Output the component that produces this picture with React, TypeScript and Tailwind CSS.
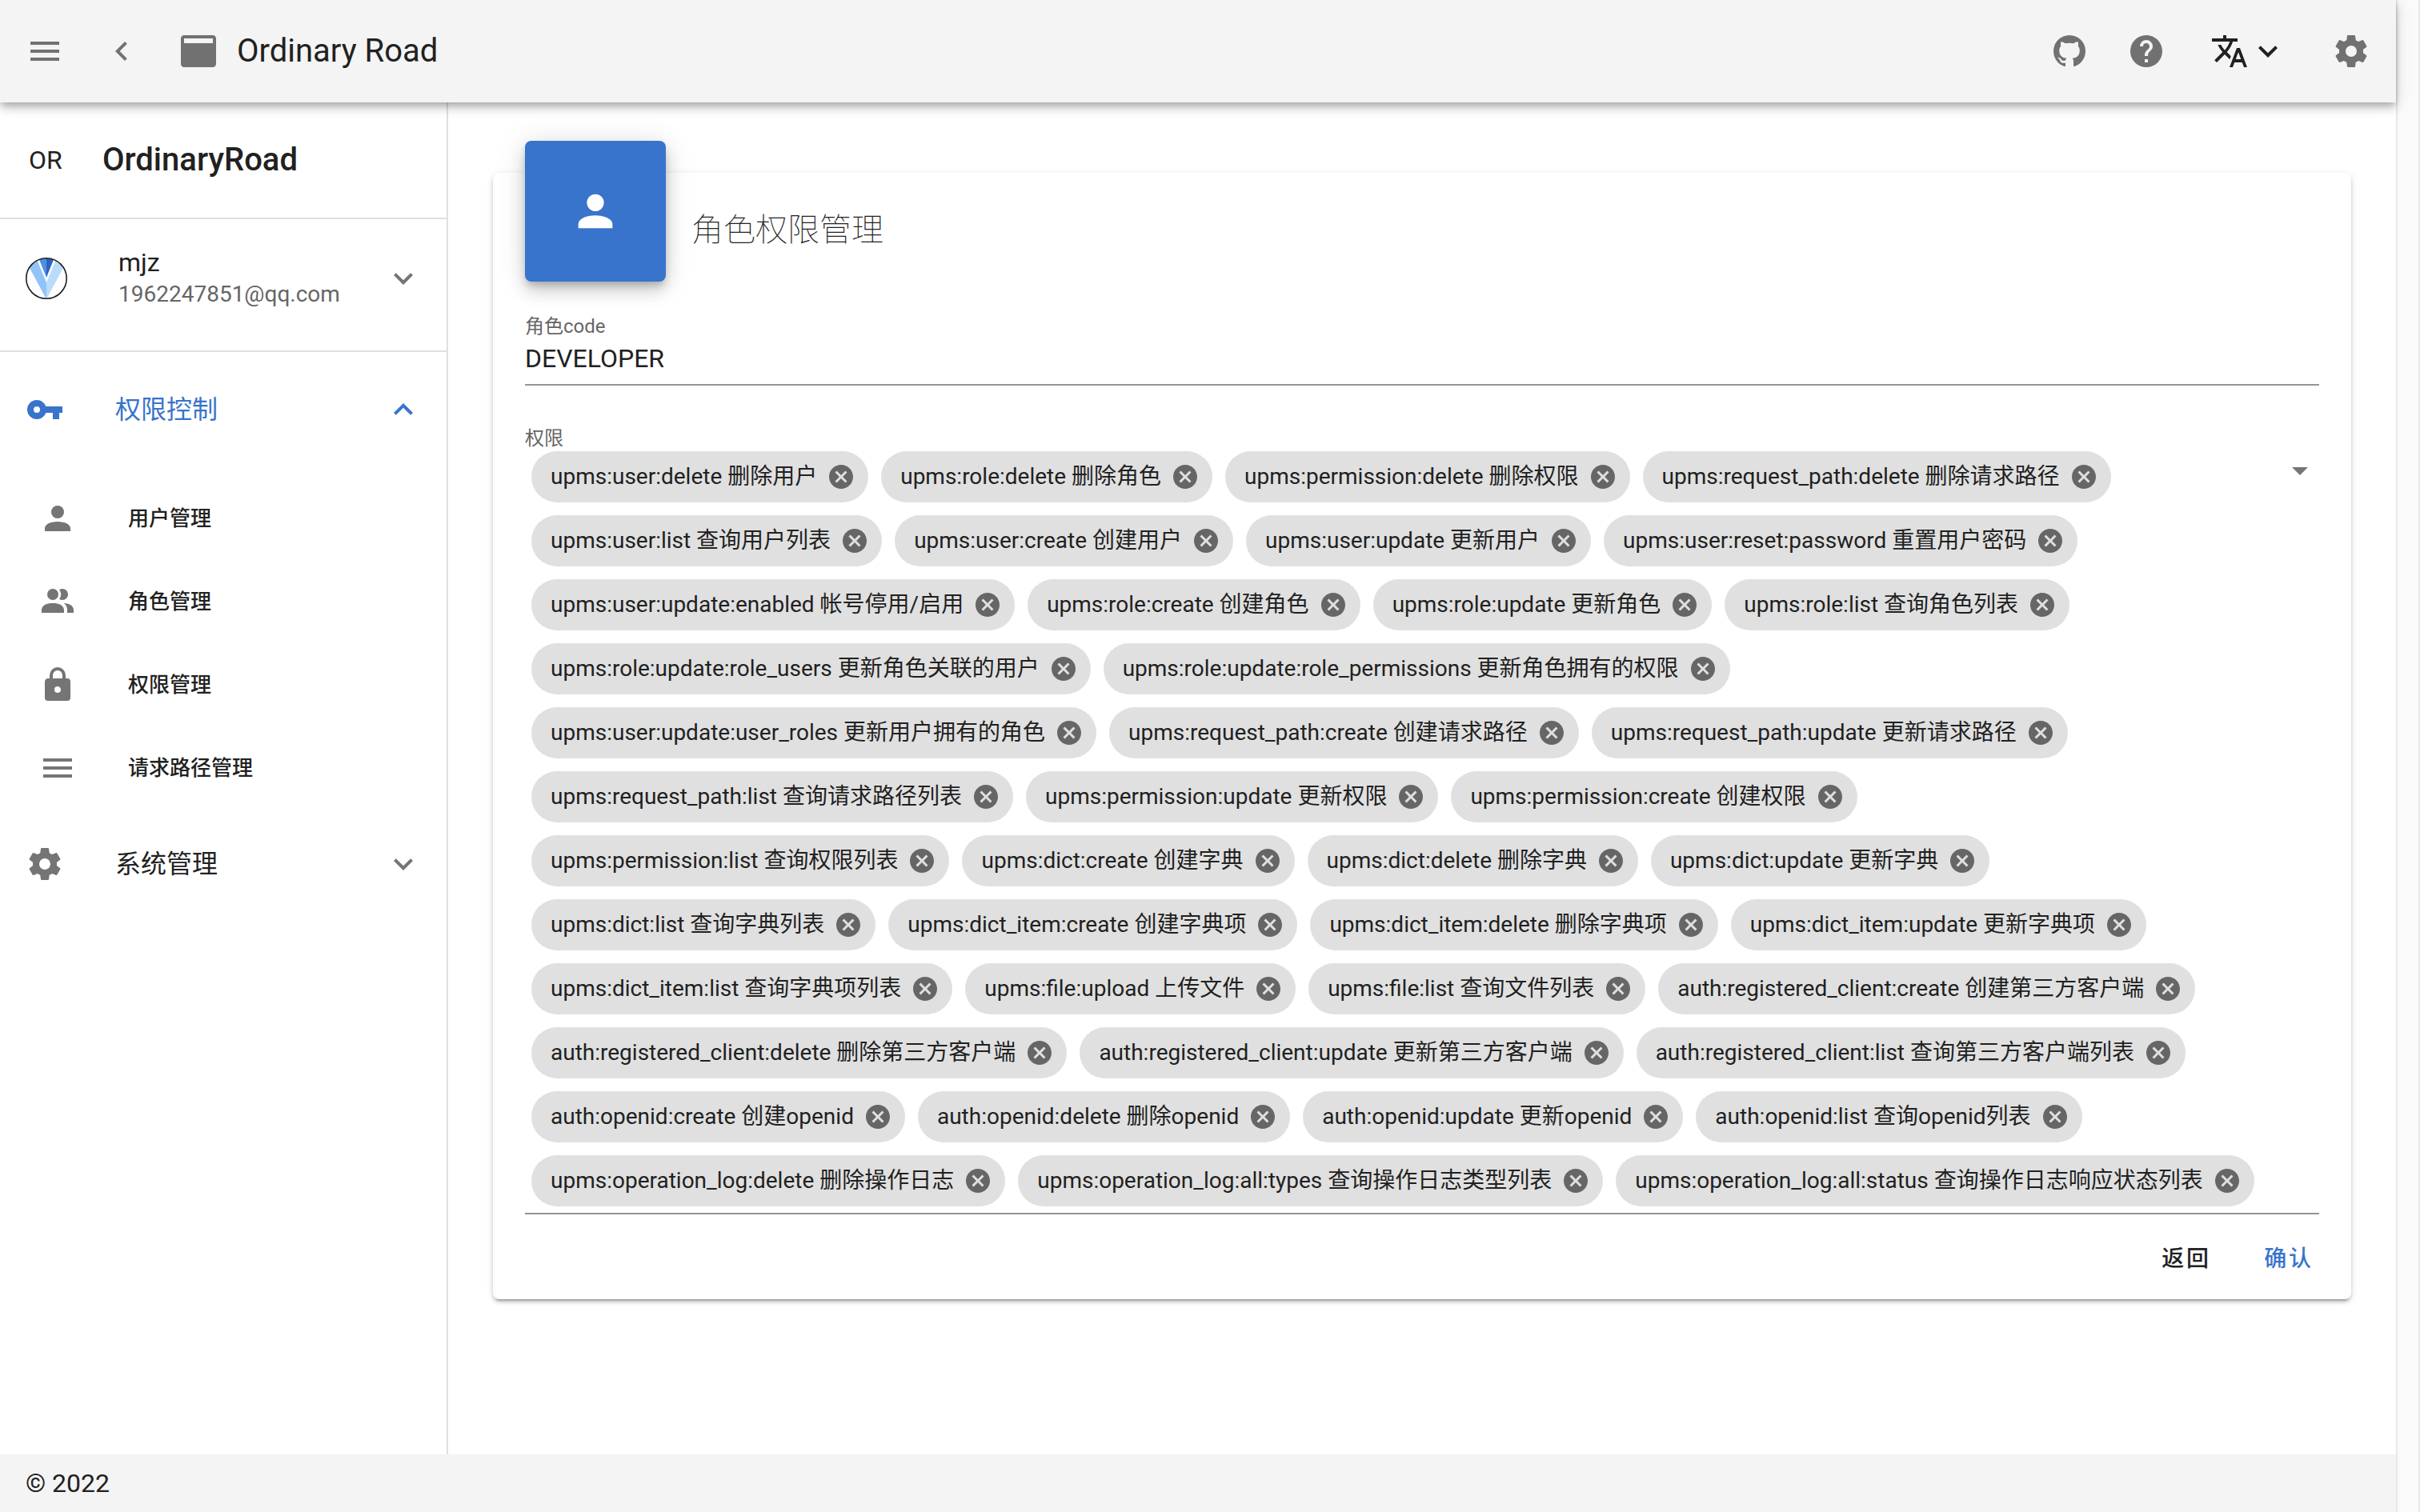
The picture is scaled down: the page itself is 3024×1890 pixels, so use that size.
import React from "react";

const paths = {
  menu: "M3,6H21V8H3V6M3,11H21V13H3V11M3,16H21V18H3V16Z",
  chevronLeft: "M15.41,16.58L10.83,12L15.41,7.41L14,6L8,12L14,18L15.41,16.58Z",
  chevronDown: "M7.41,8.58L12,13.17L16.59,8.58L18,10L12,16L6,10L7.41,8.58Z",
  chevronUp: "M7.41,15.41L12,10.83L16.59,15.41L18,14L12,8L6,14L7.41,15.41Z",
  application: "M21 2H3C1.9 2 1 2.9 1 4V20C1 21.1 1.9 22 3 22H21C22.1 22 23 21.1 23 20V4C23 2.9 22.1 2 21 2M21 7H3V4H21V7Z",
  github:
    "M12,2A10,10 0 0,0 2,12C2,16.42 4.87,20.17 8.84,21.5C9.34,21.58 9.5,21.27 9.5,21C9.5,20.77 9.5,20.14 9.5,19.31C6.73,19.91 6.14,17.97 6.14,17.97C5.68,16.81 5.03,16.5 5.03,16.5C4.12,15.88 5.1,15.9 5.1,15.9C6.1,15.97 6.63,16.93 6.63,16.93C7.5,18.45 8.97,18 9.54,17.76C9.63,17.11 9.89,16.67 10.17,16.42C7.95,16.17 5.62,15.31 5.62,11.5C5.62,10.39 6,9.5 6.65,8.79C6.55,8.54 6.2,7.5 6.75,6.15C6.75,6.15 7.59,5.88 9.5,7.17C10.29,6.95 11.15,6.84 12,6.84C12.85,6.84 13.71,6.95 14.5,7.17C16.41,5.88 17.25,6.15 17.25,6.15C17.8,7.5 17.45,8.54 17.35,8.79C18,9.5 18.38,10.39 18.38,11.5C18.38,15.32 16.04,16.16 13.81,16.41C14.17,16.72 14.5,17.33 14.5,18.26C14.5,19.6 14.5,20.68 14.5,21C14.5,21.27 14.66,21.59 15.17,21.5C19.14,20.16 22,16.42 22,12A10,10 0 0,0 12,2Z",
  help: "M15.07,11.25L14.17,12.17C13.45,12.89 13,13.5 13,15H11V14.5C11,13.39 11.45,12.39 12.17,11.67L13.41,10.41C13.78,10.05 14,9.55 14,9C14,7.89 13.1,7 12,7A2,2 0 0,0 10,9H8A4,4 0 0,1 12,5A4,4 0 0,1 16,9C16,9.88 15.64,10.67 15.07,11.25M13,19H11V17H13M12,2A10,10 0 0,0 2,12A10,10 0 0,0 12,22A10,10 0 0,0 22,12C22,6.47 17.5,2 12,2Z",
  translate:
    "M12.87,15.07L10.33,12.56L10.36,12.53C12.1,10.59 13.34,8.36 14.07,6H17V4H10V2H8V4H1V6H12.17C11.5,7.92 10.44,9.75 9,11.35C8.07,10.32 7.3,9.19 6.69,8H4.69C5.42,9.63 6.42,11.17 7.67,12.56L2.58,17.58L4,19L9,14L12.11,17.11L12.87,15.07M18.5,10H16.5L12,22H14L15.12,19H19.87L21,22H23L18.5,10M15.88,17L17.5,12.67L19.12,17H15.88Z",
  cog: "M12,15.5A3.5,3.5 0 0,1 8.5,12A3.5,3.5 0 0,1 12,8.5A3.5,3.5 0 0,1 15.5,12A3.5,3.5 0 0,1 12,15.5M19.43,12.97C19.47,12.65 19.5,12.33 19.5,12C19.5,11.67 19.47,11.34 19.43,11L21.54,9.37C21.73,9.22 21.78,8.95 21.66,8.73L19.66,5.27C19.54,5.05 19.27,4.96 19.05,5.05L16.56,6.05C16.04,5.66 15.5,5.32 14.87,5.07L14.5,2.42C14.46,2.18 14.25,2 14,2H10C9.75,2 9.54,2.18 9.5,2.42L9.13,5.07C8.5,5.32 7.96,5.66 7.44,6.05L4.95,5.05C4.73,4.96 4.46,5.05 4.34,5.27L2.34,8.73C2.21,8.95 2.27,9.22 2.46,9.37L4.57,11C4.53,11.34 4.5,11.67 4.5,12C4.5,12.33 4.53,12.65 4.57,12.97L2.46,14.63C2.27,14.78 2.21,15.05 2.34,15.27L4.34,18.73C4.46,18.95 4.73,19.03 4.95,18.95L7.44,17.94C7.96,18.34 8.5,18.68 9.13,18.93L9.5,21.58C9.54,21.82 9.75,22 10,22H14C14.25,22 14.46,21.82 14.5,21.58L14.87,18.93C15.5,18.67 16.04,18.34 16.56,17.94L19.05,18.95C19.27,19.03 19.54,18.95 19.66,18.73L21.66,15.27C21.78,15.05 21.73,14.78 21.54,14.63L19.43,12.97Z",
  key: "M7,14A2,2 0 0,1 5,12A2,2 0 0,1 7,10A2,2 0 0,1 9,12A2,2 0 0,1 7,14M12.65,10C11.83,7.67 9.61,6 7,6A6,6 0 0,0 1,12A6,6 0 0,0 7,18C9.61,18 11.83,16.33 12.65,14H17V18H21V14H23V10H12.65Z",
  account: "M12,4A4,4 0 0,1 16,8A4,4 0 0,1 12,12A4,4 0 0,1 8,8A4,4 0 0,1 12,4M12,14C16.42,14 20,15.79 20,18V20H4V18C4,15.79 7.58,14 12,14Z",
  accounts:
    "M16 17V19H2V17S2 13 9 13 16 17 16 17M12.5 7.5A3.5 3.5 0 1 0 9 11A3.5 3.5 0 0 0 12.5 7.5M15.94 13A5.32 5.32 0 0 1 18 17V19H22V17S22 13.37 15.94 13M15 4A3.39 3.39 0 0 0 13.07 4.59A5 5 0 0 1 13.07 10.41A3.39 3.39 0 0 0 15 11A3.5 3.5 0 0 0 15 4Z",
  lock: "M12,17A2,2 0 0,0 14,15C14,13.89 13.1,13 12,13A2,2 0 0,0 10,15A2,2 0 0,0 12,17M18,8A2,2 0 0,1 20,10V20A2,2 0 0,1 18,22H6A2,2 0 0,1 4,20V10C4,8.89 4.9,8 6,8H7V6A5,5 0 0,1 12,1A5,5 0 0,1 17,6V8H18M12,3A3,3 0 0,0 9,6V8H15V6A3,3 0 0,0 12,3Z",
  closeCircle:
    "M12,2C17.53,2 22,6.47 22,12C22,17.53 17.53,22 12,22C6.47,22 2,17.53 2,12C2,6.47 6.47,2 12,2M15.59,7L12,10.59L8.41,7L7,8.41L10.59,12L7,15.59L8.41,17L12,13.41L15.59,17L17,15.59L13.41,12L17,8.41L15.59,7Z",
  menuDown: "M7,10L12,15L17,10H7Z",
};

type IconName = keyof typeof paths;

function Icon({ name, className = "size-12" }: { name: IconName; className?: string }) {
  return (
    <svg viewBox="0 0 24 24" fill="currentColor" aria-hidden="true" className={`shrink-0 ${className}`}>
      <path d={paths[name]} />
    </svg>
  );
}

const permissions = [
  "upms:user:delete 删除用户",
  "upms:role:delete 删除角色",
  "upms:permission:delete 删除权限",
  "upms:request_path:delete 删除请求路径",
  "upms:user:list 查询用户列表",
  "upms:user:create 创建用户",
  "upms:user:update 更新用户",
  "upms:user:reset:password 重置用户密码",
  "upms:user:update:enabled 帐号停用/启用",
  "upms:role:create 创建角色",
  "upms:role:update 更新角色",
  "upms:role:list 查询角色列表",
  "upms:role:update:role_users 更新角色关联的用户",
  "upms:role:update:role_permissions 更新角色拥有的权限",
  "upms:user:update:user_roles 更新用户拥有的角色",
  "upms:request_path:create 创建请求路径",
  "upms:request_path:update 更新请求路径",
  "upms:request_path:list 查询请求路径列表",
  "upms:permission:update 更新权限",
  "upms:permission:create 创建权限",
  "upms:permission:list 查询权限列表",
  "upms:dict:create 创建字典",
  "upms:dict:delete 删除字典",
  "upms:dict:update 更新字典",
  "upms:dict:list 查询字典列表",
  "upms:dict_item:create 创建字典项",
  "upms:dict_item:delete 删除字典项",
  "upms:dict_item:update 更新字典项",
  "upms:dict_item:list 查询字典项列表",
  "upms:file:upload 上传文件",
  "upms:file:list 查询文件列表",
  "auth:registered_client:create 创建第三方客户端",
  "auth:registered_client:delete 删除第三方客户端",
  "auth:registered_client:update 更新第三方客户端",
  "auth:registered_client:list 查询第三方客户端列表",
  "auth:openid:create 创建openid",
  "auth:openid:delete 删除openid",
  "auth:openid:update 更新openid",
  "auth:openid:list 查询openid列表",
  "upms:operation_log:delete 删除操作日志",
  "upms:operation_log:all:types 查询操作日志类型列表",
  "upms:operation_log:all:status 查询操作日志响应状态列表",
];

const subItems: { icon: IconName; label: string }[] = [
  { icon: "account", label: "用户管理" },
  { icon: "accounts", label: "角色管理" },
  { icon: "lock", label: "权限管理" },
  { icon: "menu", label: "请求路径管理" },
];

function Avatar() {
  return (
    <svg viewBox="0 0 52 52" className="size-[52px] shrink-0" role="img" aria-label="mjz">
      <defs>
        <clipPath id="avatar-clip">
          <circle cx="26" cy="26" r="25" />
        </clipPath>
      </defs>
      <circle cx="26" cy="26" r="25" fill="#fff" />
      <g clipPath="url(#avatar-clip)">
        <path d="M-2 0H13L26 31V52Z" fill="#90c4f9" />
        <path d="M54 0H39L26 31V52Z" fill="#b9dcfb" />
        <path d="M16 0H26V25Z" fill="#4a90e8" />
        <path d="M36 0H26V25Z" fill="#2f62bd" />
      </g>
      <circle cx="26" cy="26" r="25.2" fill="none" stroke="#1c1c1c" strokeWidth="1.6" />
    </svg>
  );
}

function TopBar() {
  return (
    <header className="relative z-10 flex h-32 items-center bg-[#f4f4f4] px-8 text-[#717171] shadow-[0_4px_8px_-2px_rgba(0,0,0,0.2),0_8px_10px_0_rgba(0,0,0,0.14),0_2px_20px_0_rgba(0,0,0,0.12)]">
      <button aria-label="菜单" className="flex w-12 justify-center"><Icon name="menu" /></button>
      <button aria-label="返回上一页" className="ml-12 flex w-12 justify-center"><Icon name="chevronLeft" /></button>
      <span className="ml-12"><Icon name="application" /></span>
      <h1 className="ml-6 text-[40px] leading-[60px] text-[#212121]">Ordinary Road</h1>
      <div className="ml-auto flex items-center">
        <a href="#github" aria-label="GitHub"><Icon name="github" /></a>
        <button aria-label="帮助" className="ml-12"><Icon name="help" /></button>
        <button aria-label="语言" className="ml-14 flex text-[#212121]">
          <Icon name="translate" />
          <Icon name="chevronDown" />
        </button>
        <button aria-label="设置" className="ml-14"><Icon name="cog" /></button>
      </div>
    </header>
  );
}

function Sidebar() {
  return (
    <aside className="w-[560px] shrink-0 border-r-2 border-[#e0e0e0] text-[#212121]">
      <div className="flex h-[146px] items-center border-b-2 border-[#e0e0e0] pl-9">
        <span className="w-[92px] text-[32px] leading-10">OR</span>
        <span className="text-[40px] font-medium leading-[60px]">OrdinaryRoad</span>
      </div>
      <div className="h-[166px] border-b-2 border-[#e0e0e0]">
        <button className="flex h-[148px] w-full items-center pl-8 pr-[30px] text-left">
          <Avatar />
          <span className="ml-16 flex flex-1 flex-col">
            <span className="text-[32px] leading-10">mjz</span>
            <span className="text-[28px] leading-10 text-[#666666]">1962247851@qq.com</span>
          </span>
          <Icon name="chevronDown" className="size-12 text-[#757575]" />
        </button>
      </div>
      <nav className="pt-4">
        <button className="flex h-28 w-full items-center pl-8 pr-[30px] text-left text-[#3874cb]">
          <Icon name="key" />
          <span className="ml-16 flex-1 text-[32px] leading-10">权限控制</span>
          <Icon name="chevronUp" />
        </button>
        <ul className="flex flex-col pb-3 pt-7">
          {subItems.map((item) => (
            <li key={item.label}>
              <a href={`#${item.icon}`} className="flex h-26 items-center pl-12">
                <Icon name={item.icon} className="size-12 text-[#757575]" />
                <span className="ml-16 text-[26px] font-medium leading-8">{item.label}</span>
              </a>
            </li>
          ))}
        </ul>
        <button className="flex h-28 w-full items-center pl-8 pr-[30px] text-left">
          <Icon name="cog" className="size-12 text-[#757575]" />
          <span className="ml-16 flex-1 text-[32px] leading-10">系统管理</span>
          <Icon name="chevronDown" className="size-12 text-[#757575]" />
        </button>
      </nav>
    </aside>
  );
}

function Chip({ text }: { text: string }) {
  return (
    <li className="flex h-16 items-center whitespace-nowrap rounded-full bg-[#e0e0e0] pl-6 pr-4 text-[28px] leading-10">
      {text}
      <button type="button" aria-label={`移除 ${text}`} className="ml-3 text-[#666666]">
        <Icon name="closeCircle" className="size-9" />
      </button>
    </li>
  );
}

function RoleCard() {
  return (
    <section className="rounded-lg bg-white text-[#212121] shadow-[0_6px_2px_-4px_rgba(0,0,0,0.2),0_4px_4px_0_rgba(0,0,0,0.14),0_2px_10px_0_rgba(0,0,0,0.12)]">
      <div className="px-10">
        <div className="flex items-start">
          <div className="-mt-10 flex size-44 items-center justify-center rounded-lg bg-[#3874cb] text-white shadow-[0_6px_10px_-2px_rgba(0,0,0,0.2),0_12px_20px_0_rgba(0,0,0,0.14),0_2px_36px_0_rgba(0,0,0,0.12)]">
            <Icon name="account" className="size-16" />
          </div>
          <h2 className="ml-8 pt-10 text-[40px] font-thin leading-[64px]">角色权限管理</h2>
        </div>
        <form>
          <div className="flex flex-col border-b-2 border-[#949494] pb-2 pt-10">
            <label htmlFor="role-code" className="text-2xl text-[#666666]">角色code</label>
            <input id="role-code" defaultValue="DEVELOPER" className="h-12 text-[32px] leading-10 outline-none" />
          </div>
          <div className="border-b-2 border-[#949494] pb-2 pt-[50px]">
            <div id="permission-label" className="text-2xl text-[#666666]">权限</div>
            <div className="flex items-start">
              <ul aria-labelledby="permission-label" className="flex flex-1 flex-wrap gap-4 px-2">
                {permissions.map((p) => <Chip key={p} text={p} />)}
              </ul>
              <button type="button" aria-label="展开权限列表" className="text-[#757575]">
                <Icon name="menuDown" />
              </button>
            </div>
          </div>
        </form>
      </div>
      <div className="flex justify-end px-3.5 pb-3.5 pt-5 text-[28px] font-medium tracking-widest">
        <button className="h-18 w-32">返回</button>
        <button className="h-18 w-32 text-[#3874cb]">确认</button>
      </div>
    </section>
  );
}

export default function App() {
  return (
    <div className="flex min-h-screen bg-white font-['Roboto','Noto_Sans_CJK_SC',sans-serif]">
      <div className="flex min-w-0 flex-1 flex-col">
        <TopBar />
        <div className="flex flex-1">
          <Sidebar />
          <main className="min-w-0 flex-1 px-14 pb-14 pt-22">
            <RoleCard />
          </main>
        </div>
        <footer className="flex h-18 items-center bg-[#f4f4f4] px-8 text-[32px] leading-10 text-[#212121]">© 2022</footer>
      </div>
      <div className="w-[30px] shrink-0 border-x-2 border-[#e8e8e8] bg-[#fafafa]" />
    </div>
  );
}
